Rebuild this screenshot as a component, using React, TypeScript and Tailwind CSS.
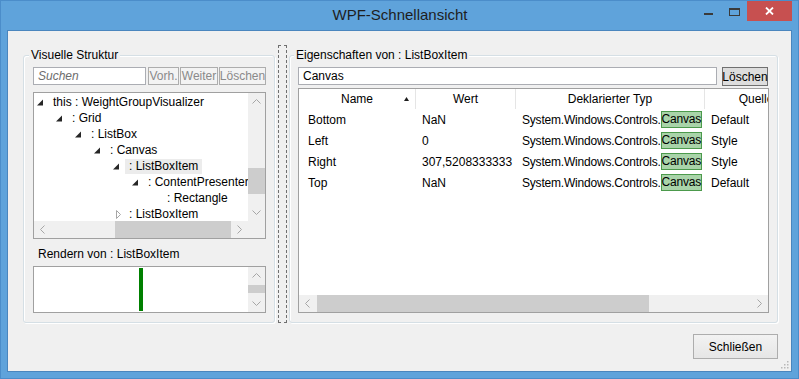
import React from "react"

type TreeRow = { indent: string; label: string; kind: "open" | "closed" | "leaf"; selected?: boolean }

const treeRows: TreeRow[] = [
  { indent: "pl-[3px]", label: "this : WeightGroupVisualizer", kind: "open" },
  { indent: "pl-[22px]", label: ": Grid", kind: "open" },
  { indent: "pl-[41px]", label: ": ListBox", kind: "open" },
  { indent: "pl-[60px]", label: ": Canvas", kind: "open" },
  { indent: "pl-[79px]", label: ": ListBoxItem", kind: "open", selected: true },
  { indent: "pl-[98px]", label: ": ContentPresenter", kind: "open" },
  { indent: "pl-[117px]", label: ": Rectangle", kind: "leaf" },
  { indent: "pl-[79px]", label: ": ListBoxItem", kind: "closed" },
]

const props = [
  { name: "Bottom", value: "NaN", source: "Default" },
  { name: "Left", value: "0", source: "Style" },
  { name: "Right", value: "307,5208333333", source: "Style" },
  { name: "Top", value: "NaN", source: "Default" },
]

// small scrollbar chevrons
const Chevron = ({ dir }: { dir: "up" | "down" | "left" | "right" }) => {
  const d = {
    up: "M0.5 4.5 L4.5 0.5 L8.5 4.5",
    down: "M0.5 0.5 L4.5 4.5 L8.5 0.5",
    left: "M4.5 0.5 L0.5 4.5 L4.5 8.5",
    right: "M0.5 0.5 L4.5 4.5 L0.5 8.5",
  }[dir]
  const vertical = dir === "up" || dir === "down"
  return (
    <svg width={vertical ? 9 : 5} height={vertical ? 5 : 9} viewBox={vertical ? "0 0 9 5" : "0 0 5 9"}>
      <path d={d} stroke="#a6a6a6" strokeWidth="1" fill="none" />
    </svg>
  )
}

const Expander = ({ kind }: { kind: TreeRow["kind"] }) => (
  <svg width="9" height="9" viewBox="0 0 9 9" className="shrink-0">
    {kind === "open" && <polygon points="6,1.5 6,7.5 0,7.5" fill="#262626" />}
    {kind === "closed" && <polygon points="3.5,0.5 7.5,4.5 3.5,8.5" fill="none" stroke="#a6a6a6" />}
  </svg>
)

const GroupBox = ({ title, className, children }: { title: string; className?: string; children: React.ReactNode }) => (
  <fieldset className={`min-w-0 border border-[#d5dfe5] rounded-[3px] shadow-[inset_1px_1px_0_#ffffff,1px_1px_0_#ffffff] mt-[2px] ${className}`}>
    <legend className="ml-[-4px] px-[2px] leading-[16px] bg-[#f0f0f0] text-black">{title}</legend>
    {children}
  </fieldset>
)

const App = () => {
  return (
    <div className="w-[799px] h-[379px] bg-[#5fa3db] border border-[#4b8dca] flex flex-col overflow-hidden font-['Liberation_Sans',Arial,sans-serif] text-[12px] leading-[16px] text-black">
      {/* Title bar */}
      <div className="grid grid-cols-[1fr_auto_1fr] h-[30px] shrink-0">
        <div />
        <div className="text-[15px] leading-[28px] text-[#1e1e1e] pl-[1px]">WPF-Schnellansicht</div>
        <div className="justify-self-end flex items-start mr-[6px] -mt-px">
          <div className="w-[26px] h-[21px] flex justify-center pt-[13px]">
            <div className="w-[9px] h-[2px] bg-[#3a3a3a]" />
          </div>
          <div className="w-[26px] h-[21px] flex justify-center pt-[8px]">
            <div className="w-[11px] h-[8px] border border-t-2 border-[#3a3a3a]" />
          </div>
          <div className="w-[45px] h-[21px] bg-[#c75050] flex items-center justify-center">
            <svg width="9" height="8" viewBox="0 0 9 8">
              <path d="M1 0.5 L8 7.5 M8 0.5 L1 7.5" stroke="#ffffff" strokeWidth="1.8" />
            </svg>
          </div>
        </div>
      </div>

      {/* Client area */}
      <div className="flex-1 mx-[7px] mb-[7px] bg-[#f0f0f0] shadow-[0_0_0_1px_#4a86be] relative flex flex-col pl-[15px] pr-[13px] pt-[14px]">
        <div className="flex h-[278px]">
          {/* Left: visual tree */}
          <GroupBox title="Visuelle Struktur" className="w-[252px] shrink-0 pl-[9px] pr-[8px] pb-[9px]">
            <div className="flex h-[18px] mt-[4px] text-[#8a8a8a]">
              <div className="w-[113px] shrink-0 border border-[#abadb3] bg-white italic text-[#6d6d6d] pl-[4px] leading-[16px]">Suchen</div>
              <div className="ml-[2px] w-[31px] shrink-0 border border-[#adadad] bg-[#f3f3f3] flex items-center justify-center overflow-hidden">Vorh.</div>
              <div className="ml-[1px] w-[38px] shrink-0 border border-[#adadad] bg-[#f3f3f3] flex items-center justify-center overflow-hidden">Weiter</div>
              <div className="ml-[1px] flex-1 min-w-0 border border-[#adadad] bg-[#f3f3f3] flex items-center justify-center overflow-hidden">Löschen</div>
            </div>

            <div className="mt-[7px] h-[147px] border border-[#a0a0a0] bg-white flex flex-col">
              <div className="flex flex-1 min-h-0">
                <div className="flex-1 min-w-0 overflow-hidden pt-px">
                  {treeRows.map((r, i) => (
                    <div key={i} className={`h-[16px] flex items-center whitespace-nowrap ${r.indent}`}>
                      <Expander kind={r.kind} />
                      <span className={`ml-[3px] px-[4px] leading-[15px] ${r.selected ? "bg-[#ececec]" : ""}`}>{r.label}</span>
                    </div>
                  ))}
                </div>
                <div className="w-[17px] shrink-0 bg-[#f0f0f0] flex flex-col">
                  <div className="h-[17px] flex items-center justify-center"><Chevron dir="up" /></div>
                  <div className="flex-1">
                    <div className="mt-[58px] h-[26px] bg-[#cdcdcd]" />
                  </div>
                  <div className="h-[17px] flex items-center justify-center"><Chevron dir="down" /></div>
                </div>
              </div>
              <div className="h-[17px] shrink-0 flex bg-[#f0f0f0]">
                <div className="w-[17px] flex items-center justify-center"><Chevron dir="left" /></div>
                <div className="flex-1 flex">
                  <div className="ml-[64px] w-[116px] bg-[#cdcdcd]" />
                </div>
                <div className="w-[17px] flex items-center justify-center"><Chevron dir="right" /></div>
                <div className="w-[17px]" />
              </div>
            </div>

            <div className="mt-[7px] pl-[5px] leading-[16px]">Rendern von : ListBoxItem</div>
            <div className="mt-[4px] h-[47px] border border-[#a0a0a0] bg-white flex">
              <div className="flex-1 flex justify-center py-px">
                <div className="w-[4px] bg-[#008000]" />
              </div>
              <div className="w-[17px] bg-[#f0f0f0] flex flex-col">
                <div className="h-[17px] flex items-center justify-center"><Chevron dir="up" /></div>
                <div className="flex-1">
                  <div className="mt-px h-[8px] bg-[#cdcdcd]" />
                </div>
                <div className="h-[17px] flex items-center justify-center"><Chevron dir="down" /></div>
              </div>
            </div>
          </GroupBox>

          {/* Splitter */}
          <div className="ml-[3px] w-[9px] shrink-0 border border-dashed border-[#6f6f6f]" />

          {/* Right: properties */}
          <GroupBox title="Eigenschaften von : ListBoxItem" className="ml-[2px] flex-1 pl-[8px] pr-[8px] pb-[9px]">
            <div className="flex h-[18px] mt-[4px]">
              <div className="flex-1 min-w-0 border border-[#abadb3] bg-white pl-[4px] leading-[16px]">Canvas</div>
              <div className="ml-[5px] mr-px w-[46px] shrink-0 h-[19px] border border-[#707070] bg-[#dddddd] flex items-center justify-center">Löschen</div>
            </div>

            <div className="mt-[3px] h-[225px] border border-[#a0a0a0] bg-white flex flex-col overflow-hidden">
              <div className="flex h-[20px] shrink-0 overflow-hidden whitespace-nowrap">
                <div className="w-[117px] shrink-0 border-r border-[#e5e5e5] relative flex items-center justify-center">
                  Name
                  <svg width="5" height="4" viewBox="0 0 5 4" className="absolute right-[6px] top-[8px]">
                    <polygon points="2.5,0 5,4 0,4" fill="#1e1e1e" />
                  </svg>
                </div>
                <div className="w-[100px] shrink-0 border-r border-[#e5e5e5] flex items-center justify-center">Wert</div>
                <div className="w-[189px] shrink-0 border-r border-[#e5e5e5] flex items-center justify-center">Deklarierter Typ</div>
                <div className="w-[102px] shrink-0 flex items-center justify-center">Quelle</div>
              </div>
              <div className="flex-1 overflow-hidden">
                {props.map(p => (
                  <div key={p.name} className="flex h-[21px] items-center whitespace-nowrap">
                    <div className="w-[117px] shrink-0 pl-[9px]">{p.name}</div>
                    <div className="w-[100px] shrink-0 pl-[6px] overflow-hidden">{p.value}</div>
                    <div className="w-[189px] shrink-0 pl-[6px] flex items-center tracking-[-0.2px]">
                      System.Windows.Controls.
                      <span className="h-[17px] leading-[15px] border border-[#4c9a4c] bg-[#a9d4a9]">Canvas</span>
                    </div>
                    <div className="pl-[6px]">{p.source}</div>
                  </div>
                ))}
              </div>
              <div className="h-[17px] shrink-0 flex bg-[#f0f0f0]">
                <div className="w-[17px] flex items-center justify-center"><Chevron dir="left" /></div>
                <div className="flex-1 flex">
                  <div className="ml-px w-[332px] bg-[#cdcdcd]" />
                </div>
                <div className="w-[17px] flex items-center justify-center"><Chevron dir="right" /></div>
              </div>
            </div>
          </GroupBox>
        </div>

        {/* Bottom button */}
        <div className="mt-[11px] flex justify-end">
          <div className="w-[85px] h-[25px] border border-[#adadad] bg-gradient-to-b from-[#f2f2f2] to-[#e6e6e6] flex items-center justify-center">Schließen</div>
        </div>

        {/* Resize grip */}
        <svg width="9" height="9" viewBox="0 0 9 9" className="absolute right-[2px] bottom-[2px]">
          {[[7, 1], [7, 4], [4, 4], [7, 7], [4, 7], [1, 7]].map(([x, y], i) => (
            <rect key={i} x={x} y={y} width="1.5" height="1.5" fill="#b8b8b8" />
          ))}
        </svg>
      </div>
    </div>
  )
}

export default App
